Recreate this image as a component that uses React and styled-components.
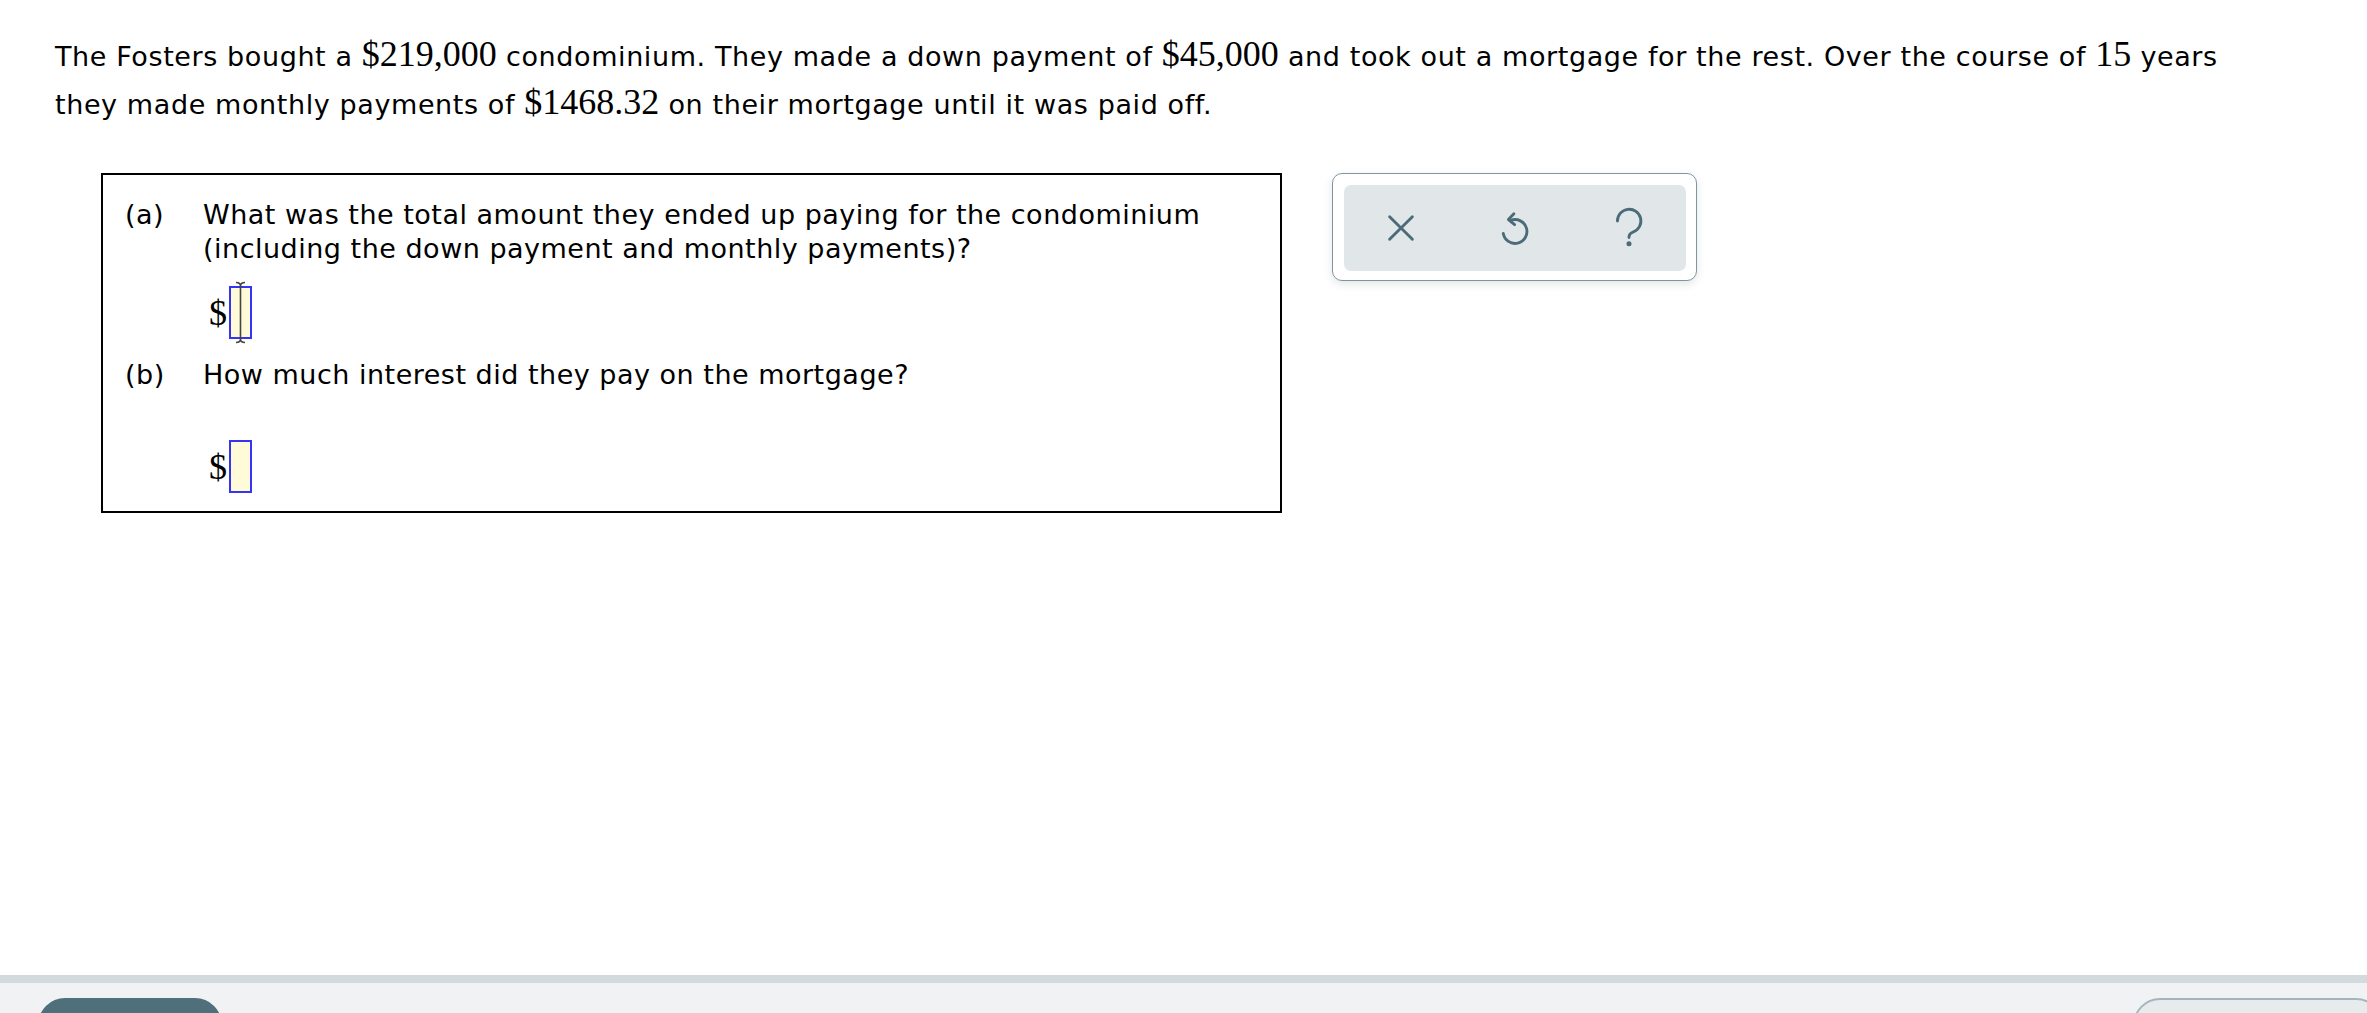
import styled, { createGlobalStyle } from 'styled-components';

const GlobalStyle = createGlobalStyle`
  html, body {
    margin: 0;
    padding: 0;
    background: #fff;
  }
  body {
    font-family: "DejaVu Sans", Verdana, sans-serif;
    color: #000;
  }
`;

const Page = styled.div`
  height: 100vh;
  display: flex;
  flex-direction: column;
  overflow: hidden;
`;

const Main = styled.main`
  flex: 0 0 975px;
  box-sizing: border-box;
  padding: 33px 120px 0 55px;
`;

const Prompt = styled.p`
  margin: 0;
  font-size: 27px;
  letter-spacing: 0.6px;
  line-height: 48px;
`;

const Math = styled.span`
  font-family: "Liberation Serif", "Times New Roman", serif;
  font-size: 36px;
  letter-spacing: 0;
  line-height: 1;
`;

const Row = styled.div`
  display: flex;
  align-items: flex-start;
  gap: 50px;
  margin: 44px 0 0 46px;
`;

const AnswerBox = styled.section`
  width: 1181px;
  box-sizing: border-box;
  border: 2px solid #000;
  padding: 23px 22px 18px;
`;

const Part = styled.div`
  display: grid;
  grid-template-columns: 78px 1fr;
  font-size: 27px;
  letter-spacing: 0.5px;
  line-height: 34px;
  margin-top: ${(p) => p.$gap || 0}px;
`;

const Label = styled.span``;

const Question = styled.div``;

const AnswerLine = styled.div`
  display: flex;
  align-items: center;
  padding-left: 6px;
  margin-top: ${(p) => p.$gap}px;
`;

const Dollar = styled.span`
  font-family: "Liberation Serif", "Times New Roman", serif;
  font-size: 36px;
  letter-spacing: 0;
  line-height: 1;
  margin-right: 2px;
`;

const InputWrap = styled.span`
  position: relative;
  display: inline-block;
`;

const AnswerInput = styled.span`
  display: block;
  width: 23px;
  height: 53px;
  box-sizing: border-box;
  border: 2px solid #3434f2;
  background: #fffbd8;
`;

const Caret = styled.svg`
  position: absolute;
  left: 5px;
  top: -5px;
  width: 13px;
  height: 63px;
`;

const Tools = styled.div`
  width: 365px;
  height: 108px;
  box-sizing: border-box;
  border: 1.5px solid #7f96a1;
  border-radius: 10px;
  background: #fff;
  box-shadow: 0 3px 8px rgba(60, 80, 90, 0.15);
  padding: 11px 10px 9px 11px;
`;

const ToolTray = styled.div`
  height: 100%;
  background: #e1e6e9;
  border-radius: 7px;
  display: grid;
  grid-template-columns: repeat(3, 1fr);
  align-items: center;
  justify-items: center;
`;

const ToolButton = styled.button`
  background: none;
  border: none;
  padding: 0;
  cursor: pointer;
  display: flex;
  svg {
    width: 44px;
    height: 44px;
    stroke: #4b6b78;
    fill: none;
    stroke-width: 1.55;
    stroke-linecap: round;
    stroke-linejoin: round;
  }
`;

const Footer = styled.footer`
  flex: 1 0 auto;
  border-top: 8px solid #d3dadd;
  background: #f1f2f4;
  display: flex;
  justify-content: space-between;
  align-items: flex-start;
  padding: 15px 0 0 38px;
`;

const PrimaryButton = styled.button`
  width: 184px;
  height: 54px;
  border: none;
  border-radius: 27px;
  background: #4f6f7a;
`;

const SecondaryButton = styled.button`
  width: 250px;
  height: 54px;
  margin-right: -16px;
  border: 2px solid #a3b5bd;
  border-radius: 27px;
  background: #e7ebed;
`;

function Cursor() {
  return (
    <Caret viewBox="0 0 13 63">
      <path d="M2 1.5 Q6.5 1.5 6.5 5 Q6.5 1.5 11 1.5 M6.5 5 V58 M2 61.5 Q6.5 61.5 6.5 58 Q6.5 61.5 11 61.5" stroke="#444" strokeWidth="1.6" fill="none" />
    </Caret>
  );
}

export default function App() {
  return (
    <Page>
      <GlobalStyle />
      <Main>
        <Prompt>
          The Fosters bought a <Math>$219,000</Math> condominium. They made a down payment of{' '}
          <Math>$45,000</Math> and took out a mortgage for the rest. Over the course of <Math>15</Math> years
          they made monthly payments of <Math>$1468.32</Math> on their mortgage until it was paid off.
        </Prompt>
        <Row>
          <AnswerBox>
            <Part>
              <Label>(a)</Label>
              <Question>
                What was the total amount they ended up paying for the condominium (including the down payment and monthly payments)?
                <AnswerLine $gap={20}>
                  <Dollar>$</Dollar>
                  <InputWrap>
                    <AnswerInput />
                    <Cursor />
                  </InputWrap>
                </AnswerLine>
              </Question>
            </Part>
            <Part $gap={19}>
              <Label>(b)</Label>
              <Question>
                How much interest did they pay on the mortgage?
                <AnswerLine $gap={48}>
                  <Dollar>$</Dollar>
                  <InputWrap>
                    <AnswerInput />
                  </InputWrap>
                </AnswerLine>
              </Question>
            </Part>
          </AnswerBox>
          <Tools>
            <ToolTray>
              <ToolButton aria-label="Clear">
                <svg viewBox="0 0 24 24">
                  <path d="M5.8 5.8 L18.2 18.2 M18.2 5.8 L5.8 18.2" />
                </svg>
              </ToolButton>
              <ToolButton aria-label="Undo">
                <svg viewBox="0 0 24 24">
                  <path d="M9.8 7.8 A6.5 6.5 0 1 1 5.6 15" />
                  <path d="M11.4 4.2 L8.4 7.4 L11.8 10.2" />
                </svg>
              </ToolButton>
              <ToolButton aria-label="Help">
                <svg viewBox="0 0 24 24">
                  <path d="M5.7 8.2 A6.4 6.4 0 1 1 14.2 14.2 C12.8 14.8 12 15.6 12 16.8 V17.2" />
                  <circle cx="12" cy="20.6" r="0.6" fill="#4b6b78" />
                </svg>
              </ToolButton>
            </ToolTray>
          </Tools>
        </Row>
      </Main>
      <Footer>
        <PrimaryButton />
        <SecondaryButton />
      </Footer>
    </Page>
  );
}
